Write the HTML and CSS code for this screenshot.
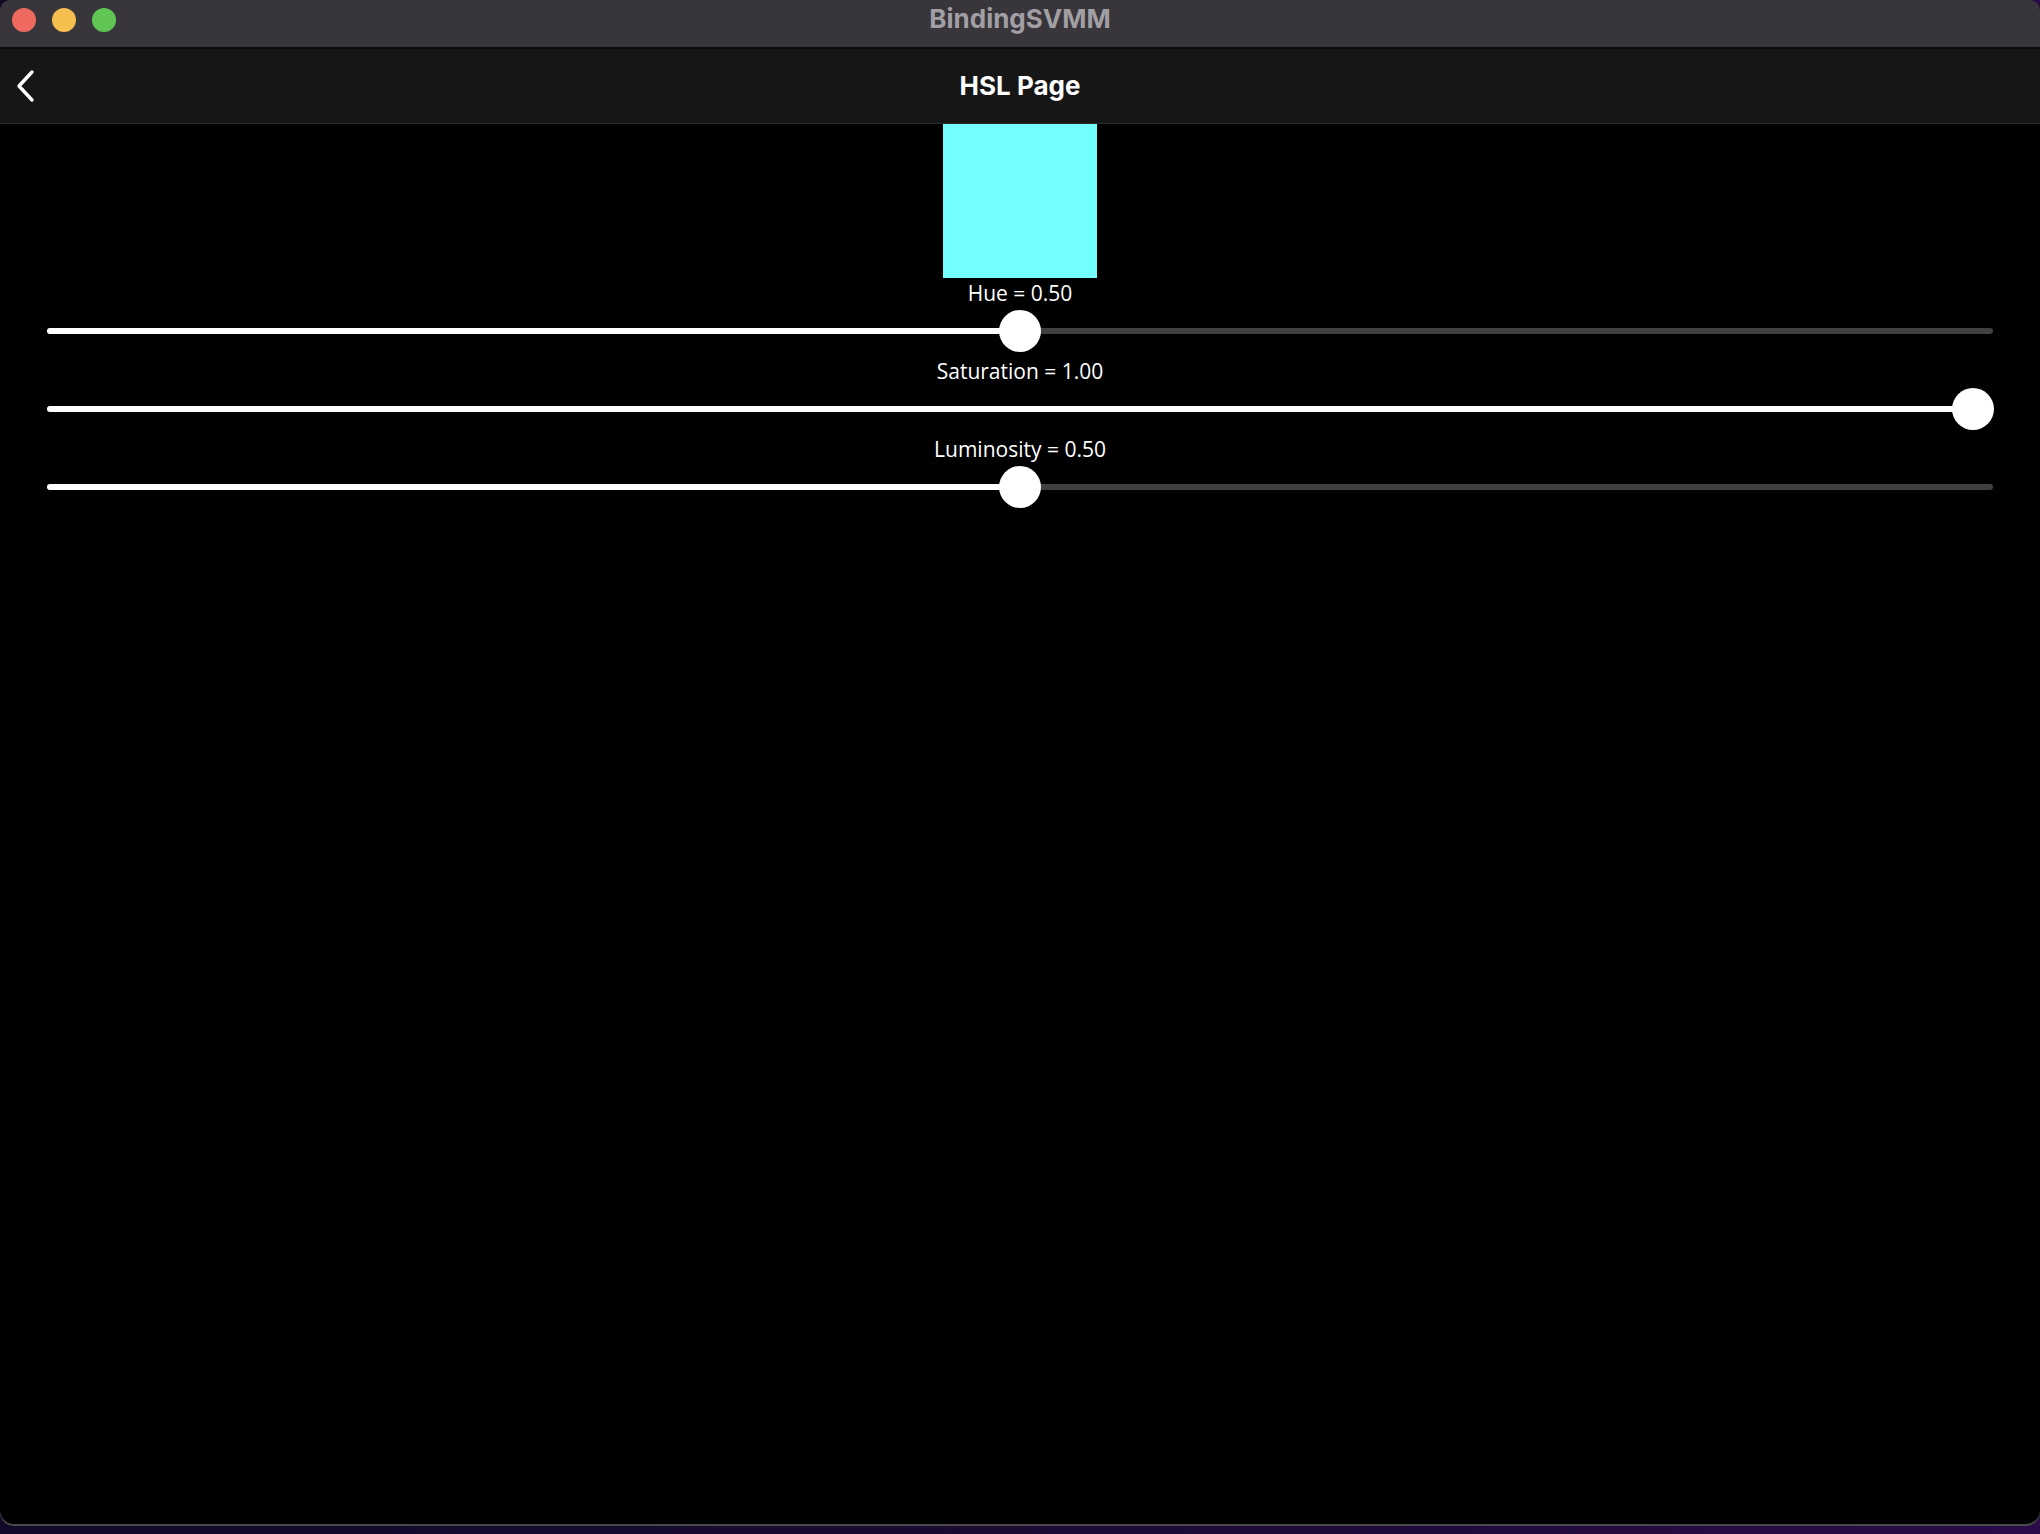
FILE: index.html
```html
<!DOCTYPE html>
<html>
<head>
<meta charset="utf-8">
<link rel="stylesheet" href="styles.css">
</head>
<body>
<div class="window">
  <div class="titlebar">
    <div class="lights">
      <span class="light red"></span>
      <span class="light yellow"></span>
      <span class="light green"></span>
    </div>
    <div class="wintitle">BindingSVMM</div>
  </div>
  <div class="navbar">
    <div class="back">
      <svg width="22" height="34" viewBox="0 0 22 34"><path d="M18 3 L5 17 L18 31" fill="none" stroke="#fff" stroke-width="3.4" stroke-linecap="round" stroke-linejoin="round"/></svg>
    </div>
    <div class="navtitle">HSL Page</div>
  </div>
  <div class="content">
    <div class="swatch"></div>
    <div class="label">Hue = 0.50</div>
    <div class="slider"><div class="track"></div><div class="fill" style="width: calc(20px + (100% - 40px) * 0.5)"></div><div class="thumb" style="left: calc(-1px + (100% - 40px) * 0.5)"></div></div>
    <div class="label">Saturation = 1.00</div>
    <div class="slider"><div class="track"></div><div class="fill" style="width: calc(20px + (100% - 40px) * 1)"></div><div class="thumb" style="left: calc(-1px + (100% - 40px) * 1)"></div></div>
    <div class="label">Luminosity = 0.50</div>
    <div class="slider"><div class="track"></div><div class="fill" style="width: calc(20px + (100% - 40px) * 0.5)"></div><div class="thumb" style="left: calc(-1px + (100% - 40px) * 0.5)"></div></div>
  </div>
</div>
</body>
</html>
```

FILE: styles.css
```css
html, body {
  margin: 0;
  padding: 0;
}
body {
  width: 2040px;
  height: 1534px;
  background: linear-gradient(90deg, #120a28 0%, #1a0a34 50%, #2a0c48 100%);
  overflow: hidden;
}
.window {
  height: 1526px;
  background: #000;
  border-radius: 10px 10px 14px 14px;
  box-shadow: inset 0 -2px 0 #4a4a4a;
  overflow: hidden;
  display: flex;
  flex-direction: column;
}
.titlebar {
  height: 47px;
  background: #38353b;
  border-bottom: 2px solid #0c0c0c;
  position: relative;
  display: flex;
  align-items: center;
  justify-content: center;
}
.lights {
  position: absolute;
  left: 12px;
  top: 8px;
  display: flex;
  gap: 16px;
}
.light {
  width: 24px;
  height: 24px;
  border-radius: 50%;
  display: block;
}
.red { background: #ee6a5f; }
.yellow { background: #f5bf4f; }
.green { background: #61c554; }
.wintitle {
  font-family: Inter, "Liberation Sans", sans-serif;
  font-weight: 700;
  font-size: 26px;
  color: #a19fa4;
  margin-top: -10px;
  letter-spacing: 0;
}
.navbar {
  height: 74px;
  background: #161616;
  border-bottom: 1px solid #2c2c2c;
  position: relative;
  display: flex;
  align-items: center;
  justify-content: center;
}
.back {
  position: absolute;
  left: 14px;
  top: 20px;
  display: flex;
}
.navtitle {
  font-family: Inter, "Liberation Sans", sans-serif;
  font-weight: 700;
  font-size: 26px;
  color: #fff;
  margin-top: -1px;
}
.content {
  display: flex;
  flex-direction: column;
  align-items: stretch;
}
.swatch {
  width: 154px;
  height: 154px;
  background: #74ffff;
  align-self: center;
}
.label {
  height: 28px;
  line-height: 30px;
  text-align: center;
  font-family: "Open Sans", sans-serif;
  font-size: 21px;
  color: #fff;
}
.slider {
  position: relative;
  height: 50px;
  margin: 0 47px;
}
.track {
  position: absolute;
  left: 0;
  right: 0;
  top: 22px;
  height: 6px;
  border-radius: 3px;
  background: #404040;
}
.fill {
  position: absolute;
  left: 0;
  top: 22px;
  height: 6px;
  border-radius: 3px;
  background: #fff;
}
.thumb {
  position: absolute;
  top: 4px;
  width: 42px;
  height: 42px;
  border-radius: 50%;
  background: #fff;
}
```
